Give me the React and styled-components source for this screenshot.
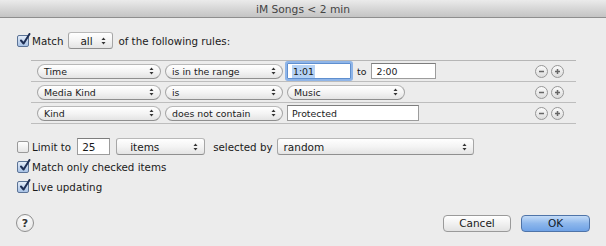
import React from "react";
import styled, { createGlobalStyle, css } from "styled-components";

const Global = createGlobalStyle`
  html, body { margin: 0; padding: 0; background: #ececec; }
  body { font-family: "DejaVu Sans", "Noto Sans", sans-serif; color: #1a1a1a; }
`;

const Window = styled.div`
  width: 606px;
  height: 246px;
  background: #ececec;
  display: flex;
  flex-direction: column;
  overflow: hidden;
`;

const TitleBar = styled.div`
  box-sizing: border-box;
  height: 18px;
  padding-top: 1px;
  border-bottom: 1px solid #8e8e8e;
  background: linear-gradient(#ebebeb, #d3d3d3 60%, #c4c4c4);
  display: flex;
  align-items: center;
  justify-content: center;
  font-size: 10.7px;
  color: #444;
`;

const Body = styled.div`
  flex: 1;
  display: flex;
  flex-direction: column;
  padding: 14px 16px 0 17px;
  font-size: 10.3px;
`;

const Line = styled.div`
  display: flex;
  align-items: center;
  height: ${(p) => p.$h || 17}px;
  margin-top: ${(p) => p.$mt || 0}px;
`;

const Label = styled.span`
  margin-left: ${(p) => p.$ml || 0}px;
  margin-right: ${(p) => p.$mr || 0}px;
  white-space: nowrap;
`;

const Box = styled.span`
  width: 12px;
  height: 12px;
  box-sizing: border-box;
  border: 1px solid ${(p) => (p.$on ? "#5b7396" : "#9a9a9a")};
  border-radius: 2px;
  background: ${(p) => (p.$on ? "linear-gradient(#e3ecf8, #a9c3e6)" : "linear-gradient(#ffffff, #e6e6e6)")};
  position: relative;
  flex: none;
  margin-right: 3px;
  display: inline-flex;
`;

const Check = styled.svg`
  position: absolute;
  left: 1px;
  top: -3px;
`;

const Checkbox = ({ on }) => (
  <Box $on={on}>
    {on && (
      <Check width="12" height="13" viewBox="0 0 12 13">
        <path d="M2 7.5 L4.6 10.5 L10.5 1" fill="none" stroke="#1e2f55" strokeWidth="2" strokeLinecap="round" strokeLinejoin="round" />
      </Check>
    )}
  </Box>
);

const popupBase = css`
  box-sizing: border-box;
  display: flex;
  align-items: center;
  justify-content: space-between;
  background: linear-gradient(#ffffff, #f4f4f4 50%, #e4e4e4);
  border: 1px solid #a6a6a6;
  border-top-color: #b8b8b8;
  border-bottom-color: #8f8f8f;
  flex: none;
`;

const SquarePopup = styled.div`
  ${popupBase};
  width: ${(p) => p.$w}px;
  height: 17px;
  border-radius: 3px;
  padding: 0 6px 0 ${(p) => p.$pl || 8}px;
  font-size: 10.5px;
  margin-left: ${(p) => p.$ml || 0}px;
`;

const PillPopup = styled.div`
  ${popupBase};
  width: ${(p) => p.$w}px;
  height: 15px;
  border-radius: 8px;
  padding: 0 6px 0 6px;
  font-size: 9.4px;
  margin-left: ${(p) => p.$ml || 0}px;
`;

const Arrows = () => (
  <svg width="5" height="8" viewBox="0 0 5 8">
    <path d="M2.5 0.5 L4.5 3 L0.5 3 Z" fill="#333" />
    <path d="M2.5 7.5 L4.5 5 L0.5 5 Z" fill="#333" />
  </svg>
);

const Field = styled.div`
  box-sizing: border-box;
  width: ${(p) => p.$w}px;
  height: ${(p) => p.$h || 16}px;
  background: #fff;
  border: 1px solid #9c9c9c;
  border-top-color: #7d7d7d;
  display: flex;
  align-items: center;
  padding-left: 4px;
  font-size: ${(p) => p.$fs || 9.4}px;
  margin-left: ${(p) => p.$ml || 0}px;
  flex: none;
  ${(p) =>
    p.$focus &&
    css`
      border: 1px solid #5f8fcf;
      box-shadow: 0 0 0 2px #8fb5e8;
      border-radius: 1px;
    `}
`;

const Selected = styled.span`
  background: #b5d2f5;
  padding: 1px 1px;
`;

const Rules = styled.div`
  margin-left: 14px;
  margin-top: 11px;
  width: 545px;
  border-top: 1px solid #b6b6b6;
`;

const Rule = styled.div`
  height: 20px;
  border-bottom: 1px solid #bdbdbd;
  display: flex;
  align-items: center;
  padding-left: 6px;
  padding-right: 12px;
  gap: 4px;
  font-size: 9.4px;
`;

const RowButtons = styled.div`
  margin-left: auto;
  display: flex;
  gap: 3px;
`;

const RoundBtn = styled.span`
  width: 13px;
  height: 13px;
  box-sizing: border-box;
  border-radius: 50%;
  border: 1px solid #979797;
  background: linear-gradient(#fbfbfb, #dcdcdc);
  display: inline-flex;
  align-items: center;
  justify-content: center;
`;

const Minus = () => (
  <RoundBtn>
    <svg width="9" height="9" viewBox="0 0 9 9">
      <path d="M2 4.5 H7" stroke="#666" strokeWidth="1.5" />
    </svg>
  </RoundBtn>
);
const Plus = () => (
  <RoundBtn>
    <svg width="9" height="9" viewBox="0 0 9 9">
      <path d="M2 4.5 H7 M4.5 2 V7" stroke="#666" strokeWidth="1.5" />
    </svg>
  </RoundBtn>
);

const Footer = styled.div`
  margin-top: 19px;
  display: flex;
  align-items: center;
  margin-left: -1px;
`;

const Help = styled.span`
  width: 18px;
  height: 18px;
  box-sizing: border-box;
  border-radius: 50%;
  border: 1px solid #8f8f8f;
  background: radial-gradient(circle at 50% 30%, #ffffff, #e2e2e2);
  display: inline-flex;
  align-items: center;
  justify-content: center;
  font-size: 11px;
  font-weight: bold;
  color: #333;
`;

const Button = styled.div`
  box-sizing: border-box;
  width: ${(p) => p.$w}px;
  height: 17px;
  border-radius: 4px;
  display: flex;
  align-items: center;
  justify-content: center;
  font-size: 10.5px;
  margin-left: ${(p) => p.$ml || 0}px;
  ${(p) =>
    p.$primary
      ? css`
          background: linear-gradient(#c3dbf7, #8db7ec 50%, #6fa2e6);
          border: 1px solid #4f74a8;
          color: #0f1a2a;
        `
      : css`
          background: linear-gradient(#ffffff, #f1f1f1 50%, #e2e2e2);
          border: 1px solid #9a9a9a;
        `}
`;

export default function App() {
  return (
    <Window>
      <Global />
      <TitleBar>iM Songs &lt; 2 min</TitleBar>
      <Body>
        <Line>
          <Checkbox on />
          <Label>Match</Label>
          <SquarePopup $w={45} $ml={5} $pl={11}>
            <span>all</span>
            <Arrows />
          </SquarePopup>
          <Label $ml={5}>of the following rules:</Label>
        </Line>

        <Rules>
          <Rule>
            <PillPopup $w={124}><span>Time</span><Arrows /></PillPopup>
            <PillPopup $w={118}><span>is in the range</span><Arrows /></PillPopup>
            <Field $w={64} $focus><Selected>1:01</Selected></Field>
            <Label $ml={2} $mr={1}>to</Label>
            <Field $w={65}>2:00</Field>
            <RowButtons><Minus /><Plus /></RowButtons>
          </Rule>
          <Rule>
            <PillPopup $w={124}><span>Media Kind</span><Arrows /></PillPopup>
            <PillPopup $w={118}><span>is</span><Arrows /></PillPopup>
            <PillPopup $w={118}><span>Music</span><Arrows /></PillPopup>
            <RowButtons><Minus /><Plus /></RowButtons>
          </Rule>
          <Rule>
            <PillPopup $w={124}><span>Kind</span><Arrows /></PillPopup>
            <PillPopup $w={118}><span>does not contain</span><Arrows /></PillPopup>
            <Field $w={132}>Protected</Field>
            <RowButtons><Minus /><Plus /></RowButtons>
          </Rule>
        </Rules>

        <Line $mt={14}>
          <Checkbox />
          <Label>Limit to</Label>
          <Field $w={33} $h={17} $fs={10.5} $ml={6}>25</Field>
          <SquarePopup $w={89} $ml={6} $pl={13}>
            <span>items</span>
            <Arrows />
          </SquarePopup>
          <Label $ml={8}>selected by</Label>
          <SquarePopup $w={197} $ml={4} $pl={6}>
            <span>random</span>
            <Arrows />
          </SquarePopup>
        </Line>
        <Line $h={16} $mt={4}>
          <Checkbox on />
          <Label>Match only checked items</Label>
        </Line>
        <Line $h={16} $mt={4}>
          <Checkbox on />
          <Label>Live updating</Label>
        </Line>

        <Footer>
          <Help>?</Help>
          <Button $w={68} $ml={409}>Cancel</Button>
          <Button $w={69} $ml={10} $primary>OK</Button>
        </Footer>
      </Body>
    </Window>
  );
}
